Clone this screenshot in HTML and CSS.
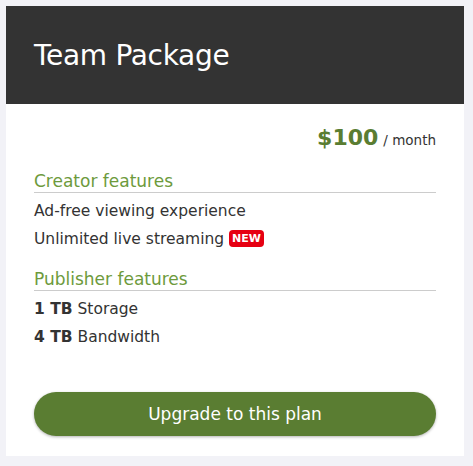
FILE: index.html
```html
<!DOCTYPE html>
<html>
<head>
<meta charset="utf-8">
<link rel="stylesheet" href="styles.css">
</head>
<body>
<div class="card">
  <div class="header"><h1 class="title">Team Package</h1></div>
  <div class="body">
    <div class="price"><span class="amount">$100</span><span class="per">/ month</span></div>
    <h2 class="section">Creator features</h2>
    <ul class="list">
      <li>Ad-free viewing experience</li>
      <li>Unlimited live streaming <span class="badge">NEW</span></li>
    </ul>
    <h2 class="section">Publisher features</h2>
    <ul class="list">
      <li><b>1 TB</b> Storage</li>
      <li><b>4 TB</b> Bandwidth</li>
    </ul>
    <button class="cta">Upgrade to this plan</button>
  </div>
</div>
</body>
</html>
```
FILE: styles.css
```css
html, body { margin: 0; padding: 0; }
body {
  background: #f2f2f7;
  font-family: "DejaVu Sans", Verdana, sans-serif;
  color: #333;
  padding: 6px 9px 9px 6px;
}
.card { background: #fff; width: 458px; }
.header {
  background: #333;
  height: 98px;
  display: flex;
  align-items: center;
  padding: 0 28px;
}
.title {
  margin: 0;
  color: #fff;
  font-weight: normal;
  font-size: 28px;
  letter-spacing: -0.3px;
}
.body { padding: 18px 28px 20px 28px; }
.price {
  text-align: right;
  height: 32px;
  line-height: 32px;
}
.amount { color: #5a7d32; font-weight: bold; font-size: 22px; letter-spacing: 0; }
.per { font-size: 13.5px; margin-left: 5px; }
.section {
  margin: 16px 0 0 0;
  font-size: 17px;
  font-weight: normal;
  color: #6d9a3c;
  line-height: 22px;
  border-bottom: 1px solid #ccc;
  padding-bottom: 0;
}
.section + .list + .section { margin-top: 15px; }
.list { list-style: none; margin: 4px 0 0 0; padding: 0; font-size: 15.5px; }
.list li { line-height: 28px; }
.list b { font-weight: bold; }
.badge {
  display: inline-block;
  background: #e60012;
  color: #fff;
  font-size: 11px;
  font-weight: bold;
  line-height: 17px;
  padding: 0 3px;
  border-radius: 4px;
  vertical-align: 2px;
  margin-left: 0;
}
.cta {
  display: block;
  width: 100%;
  margin-top: 41px;
  height: 44px;
  border: none;
  border-radius: 22px;
  background: #5a7d32;
  color: #fff;
  font-family: inherit;
  font-size: 17px;
  box-shadow: 0 1px 3px rgba(0,0,0,0.3);
}
```
